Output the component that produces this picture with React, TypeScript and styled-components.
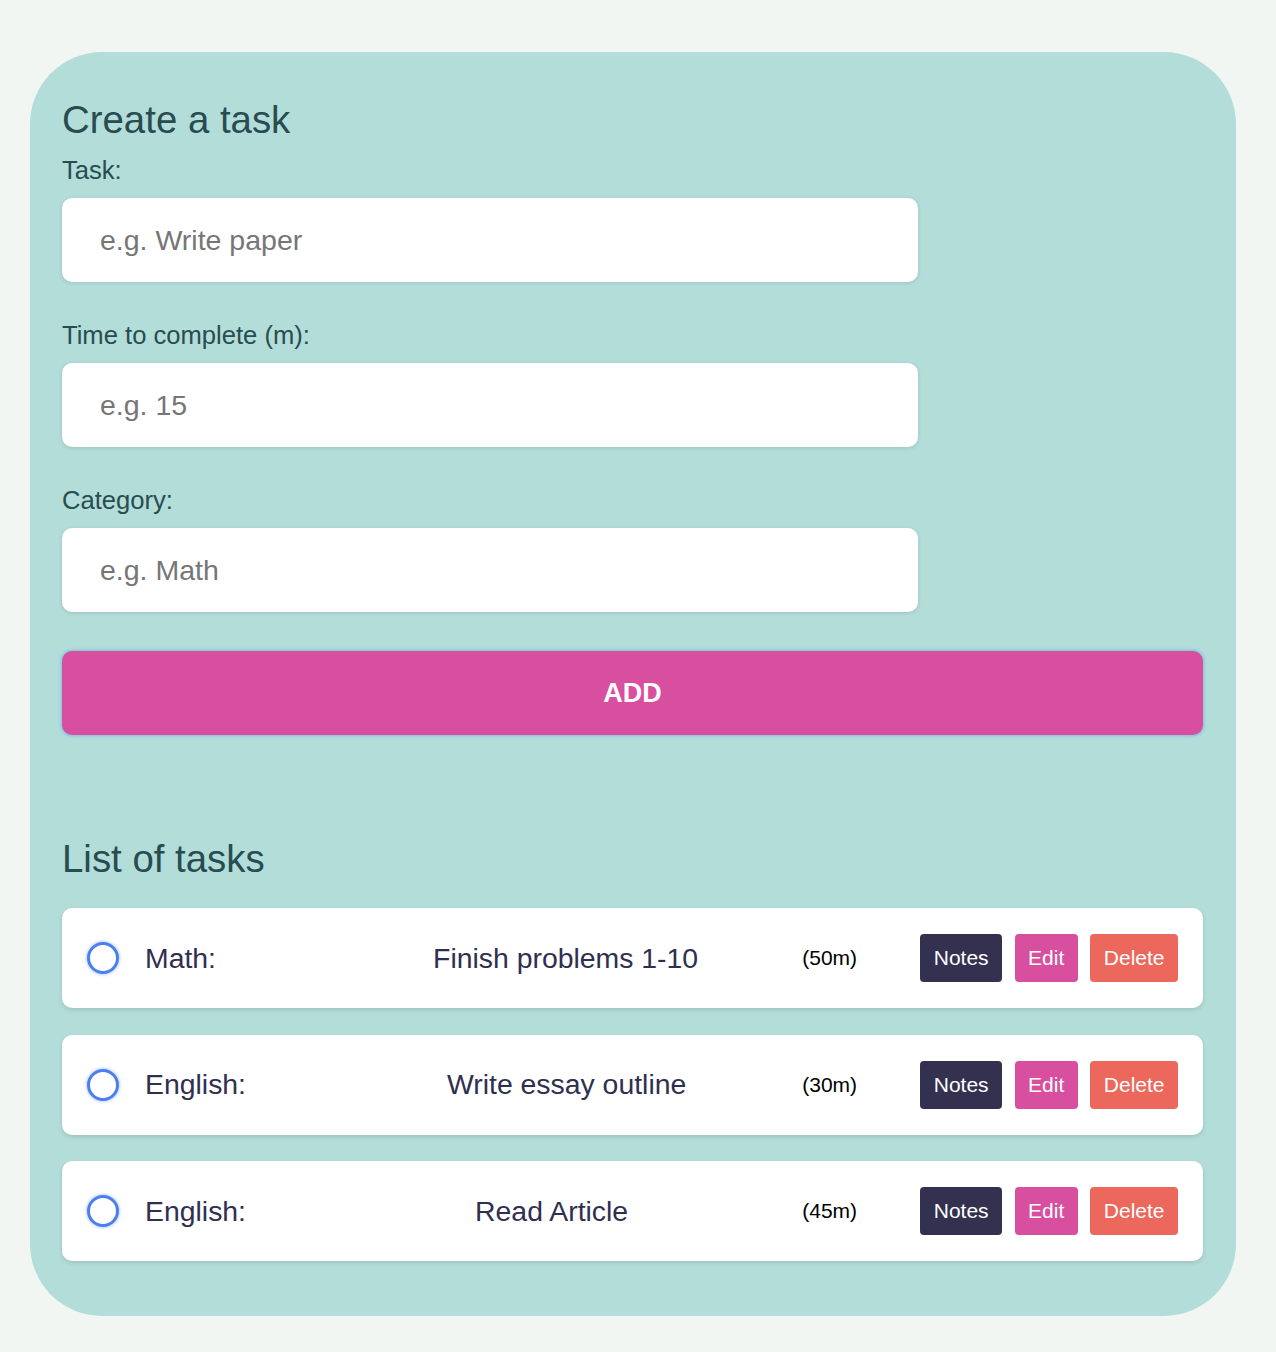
import React from "react";
import styled, { createGlobalStyle } from "styled-components";

const GlobalStyle = createGlobalStyle`
  html, body {
    margin: 0;
    padding: 0;
    background: #f1f6f3;
    font-family: "Liberation Sans", Arial, Helvetica, sans-serif;
  }
  * { box-sizing: border-box; }
`;

const Page = styled.div`
  padding: 52px 40px 36px 30px;
`;

const Card = styled.main`
  background: #b3ddd9;
  border-radius: 72px;
  padding: 49px 33px 55px 32px;
  display: flex;
  flex-direction: column;
`;

const Heading = styled.h2`
  margin: 0;
  font-size: 38.4px;
  line-height: 38px;
  font-weight: 400;
  color: #284c50;
`;

const Form = styled.form`
  display: flex;
  flex-direction: column;
  margin-top: 19px;
`;

const Field = styled.div`
  display: flex;
  flex-direction: column;
  & + & {
    margin-top: 41px;
  }
`;

const Label = styled.label`
  font-size: 25.6px;
  line-height: 25px;
  color: #284c50;
  margin-bottom: 15px;
`;

const Input = styled.input`
  width: 75%;
  height: 84px;
  border: none;
  border-radius: 10px;
  background: #ffffff;
  padding: 0 38px;
  font-family: "Liberation Sans", Arial, sans-serif;
  font-size: 28.5px;
  color: #222;
  box-shadow: 0 1px 4px rgba(0, 0, 0, 0.12);
  outline: none;
  &::placeholder {
    color: #767676;
  }
`;

const AddButton = styled.button`
  margin-top: 39px;
  height: 84px;
  width: 100%;
  border: none;
  border-radius: 10px;
  background: #d94fa0;
  color: #ffffff;
  font-family: "Liberation Sans", Arial, sans-serif;
  font-weight: 700;
  font-size: 27px;
  cursor: pointer;
  box-shadow: 0 0 3px 1px rgba(90, 160, 235, 0.55);
`;

const ListHeading = styled(Heading)`
  margin-top: 105px;
`;

const List = styled.ul`
  list-style: none;
  margin: 30px 0 0;
  padding: 0;
  display: flex;
  flex-direction: column;
  gap: 26.5px;
`;

const Row = styled.li`
  height: 100px;
  background: #ffffff;
  border-radius: 10px;
  box-shadow: 0 2px 4px rgba(0, 0, 0, 0.12);
  padding: 0 25px;
  display: grid;
  grid-template-columns: 32px 184px 1fr 92px auto;
  column-gap: 26px;
  align-items: center;
`;

const Radio = styled.input.attrs({ type: "radio" })`
  appearance: none;
  margin: 0;
  width: 32px;
  height: 32px;
  border-radius: 50%;
  border: 3px solid #4b7ff0;
  background: #ffffff;
  box-shadow: 0 0 3px 1px rgba(75, 127, 240, 0.35);
`;

const Category = styled.span`
  font-size: 28.4px;
  color: #2f2f50;
`;

const Title = styled.span<{ $nudge: number }>`
  font-size: 28.4px;
  color: #2f2f50;
  text-align: center;
  transform: translateX(${(p) => p.$nudge}px);
`;

const Time = styled.span`
  font-size: 21px;
  color: #000000;
`;

const Actions = styled.div`
  display: flex;
  gap: 12.5px;
`;

const ActionButton = styled.button<{ $bg: string }>`
  height: 48px;
  padding: 0 13.5px;
  border: none;
  border-radius: 4px;
  background: ${(p) => p.$bg};
  color: #ffffff;
  font-family: "Liberation Sans", Arial, sans-serif;
  font-size: 21px;
  cursor: pointer;
`;

const tasks = [
  { category: "Math:", title: "Finish problems 1-10", time: "(50m)", nudge: 0 },
  { category: "English:", title: "Write essay outline", time: "(30m)", nudge: 1 },
  { category: "English:", title: "Read Article", time: "(45m)", nudge: -14 },
];

export default function App() {
  return (
    <>
      <GlobalStyle />
      <Page>
        <Card>
          <Heading>Create a task</Heading>
          <Form onSubmit={(e) => e.preventDefault()}>
            <Field>
              <Label htmlFor="task">Task:</Label>
              <Input id="task" placeholder="e.g. Write paper" />
            </Field>
            <Field>
              <Label htmlFor="time">Time to complete (m):</Label>
              <Input id="time" placeholder="e.g. 15" />
            </Field>
            <Field>
              <Label htmlFor="cat">Category:</Label>
              <Input id="cat" placeholder="e.g. Math" />
            </Field>
            <AddButton type="submit">ADD</AddButton>
          </Form>
          <ListHeading>List of tasks</ListHeading>
          <List>
            {tasks.map((t, i) => (
              <Row key={i}>
                <Radio name={`task-${i}`} />
                <Category>{t.category}</Category>
                <Title $nudge={t.nudge}>{t.title}</Title>
                <Time>{t.time}</Time>
                <Actions>
                  <ActionButton $bg="#33314f">Notes</ActionButton>
                  <ActionButton $bg="#d94fa0">Edit</ActionButton>
                  <ActionButton $bg="#ec675c">Delete</ActionButton>
                </Actions>
              </Row>
            ))}
          </List>
        </Card>
      </Page>
    </>
  );
}
